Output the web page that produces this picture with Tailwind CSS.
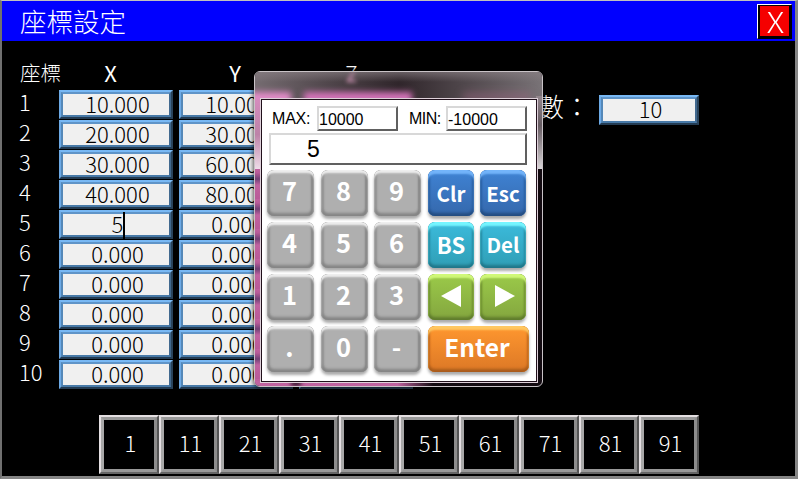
<!DOCTYPE html>
<html lang="zh-Hant">
<head>
<meta charset="utf-8">
<title>座標設定</title>
<script src="https://cdn.jsdelivr.net/npm/@tailwindcss/browser@4"></script>
</head>
<body class="bg-black">
<div class="relative flex h-[479px] w-[798px] flex-col overflow-hidden border-t border-l-2 border-r-3 border-b-3 border-t-[#c0c0c0] border-l-[#707070] border-r-[#858585] border-b-[#858585] bg-black font-['Noto_Sans_CJK_TC',sans-serif] font-light text-white">
  <header class="-ml-[2px] flex h-10 w-[797px] shrink-0 items-center justify-between bg-[#0000ff] pl-5 pr-[5px]">
    <h1 class="text-[26.5px] leading-[38px] font-light">座標設定</h1>
    <button class="flex h-[35px] w-[35px] items-center justify-center border border-r-black border-b-black border-t-white border-l-white bg-black">
      <span class="flex h-[30px] w-[29px] items-center justify-center bg-[#f50000] pl-[2px] text-[28px] leading-none"><span class="inline-block scale-x-115">X</span></span>
    </button>
  </header>

  <main class="flex pl-[17px] pt-[19px]">
    <section class="grid w-[395px] shrink-0 grid-cols-[34px_114px_114px_114px] gap-x-[6px]" id="grid">
      <div class="h-[30px] pl-px text-[20.5px] leading-[25px] whitespace-nowrap">座標</div>
      <div class="h-[30px] pr-[11px] text-center text-[22px] leading-[24px] font-normal">X</div>
      <div class="h-[30px] pr-[2px] text-center text-[22px] leading-[24px] font-normal">Y</div>
      <div class="h-[30px] pr-[10px] text-center text-[22px] leading-[24px]">Z</div>
    </section>
    <section class="flex h-[65px] flex-1 items-start justify-end pt-[35px] pr-[96px]">
      <span class="shrink-0 pr-[2px] text-right text-[26px] leading-[22px] whitespace-nowrap">數：</span>
      <div class="ml-[7px] h-[30px] w-[100px] shrink-0 border-2 border-t-[#78b8f4] border-l-[#6daae6] border-r-[#29435b] border-b-[#243c53]"><div class="h-full border-2 border-t-[#5f94c8] border-l-[#5488b8] border-r-[#41698f] border-b-[#487aa8] bg-[#f0f0f0] pl-[3px] text-center text-[22px] leading-[19px] text-black">10</div></div>
    </section>
  </main>

  <nav class="absolute top-[414px] left-[97px] flex" id="nav"></nav>

  <!-- numeric keypad -->
  <div class="absolute top-[70px] left-[252px] h-[316px] w-[289px] overflow-hidden rounded-[6px] border border-[#c9c3c7] bg-[#130b11] shadow-[0_0_4px_1px_rgba(0,0,0,0.65)]" role="dialog">
    <div class="absolute inset-x-0 top-0 h-[28px] bg-linear-to-r from-[#756c71] via-[#30262b] via-50% to-[#797377]"></div>
    <div class="absolute inset-x-0 top-0 h-[10px] bg-linear-to-b from-[#8b8286]/60 to-transparent"></div>
    <div class="absolute top-[20px] -left-2 h-[12px] w-[44px] bg-[#e38cc9] blur-[3px]"></div>
    <div class="absolute top-[20px] left-[49px] h-[12px] w-[108px] bg-[#d473b9] blur-[3px]"></div>
    <div class="absolute top-[21px] left-[208px] h-[8px] w-[68px] bg-[#97647f]/60 blur-[4px]"></div>
    <svg class="absolute top-0 left-[90px] blur-[2px]" width="14" height="14" viewBox="0 0 14 14"><path d="M9 0L3 9H11" fill="none" stroke="#d69abb" stroke-width="2"/></svg>
    <div class="absolute top-[28px] left-0 h-[69px] w-[6px] bg-linear-to-b from-[#d58cbd] via-[#bd83a8] to-[#eedce8]"></div>
    <div class="absolute top-[97px] left-0 h-[218px] w-[6px] bg-[repeating-linear-gradient(180deg,#c063a0_0px,#b65b97_4px,#704277_10px,#c063a0_16px,#b95b98_30px)]"></div>
    <div class="absolute top-[24px] right-0 h-[73px] w-[6px] bg-linear-to-b from-[#94878e] via-[#665c62] via-40% to-[#dad7d9]"></div>
    <div class="absolute bottom-0 left-0 h-[5px] w-[178px] bg-linear-to-r from-[#c063a0] from-70% via-[#c063a0] via-80% to-transparent"></div>
    <div class="absolute bottom-0 left-[36px] h-[5px] w-[10px] bg-[#2c1024] blur-[2px]"></div>

    <div class="absolute top-[26px] left-[5px] flex h-[285px] w-[278px] flex-col border border-[#dfd1da] bg-white pt-[7px] pl-[8px] font-['Liberation_Sans',sans-serif] font-normal text-black shadow-[inset_0_0_0_1px_#20101b]">
      <div class="flex h-[26px] items-start text-[16px]">
        <span class="w-[48px] pl-[3px] leading-[25px] tracking-[-0.2px]">MAX:</span>
        <div class="h-[25px] w-[81px] border-2 border-t-[#d8d8d8] border-l-[#d8d8d8] border-r-[#606060] border-b-[#606060] leading-[23px]">10000</div>
        <span class="w-[48px] pl-[11px] leading-[25px] tracking-[-0.5px]">MIN:</span>
        <div class="h-[25px] w-[81px] border-2 border-t-[#d8d8d8] border-l-[#d8d8d8] border-r-[#606060] border-b-[#606060] leading-[23px]">-10000</div>
      </div>
      <div class="mt-[1px] h-[32px] w-[258px] border-2 border-t-[#d8d8d8] border-l-[#d8d8d8] border-r-[#606060] border-b-[#606060] pl-[36px] text-[23px] leading-[29px]">5</div>
      <div class="-ml-[2px] mt-[5px] grid grid-cols-[48px_47px_48px_46px_46px] gap-x-[6px] gap-y-[6px] font-['Noto_Sans_CJK_TC',sans-serif]" id="keys"></div>
    </div>
  </div>
</div>
<script>
  const grid = document.getElementById('grid');
  const x = ['10.000','20.000','30.000','40.000','5','0.000','0.000','0.000','0.000','0.000'];
  const y = ['10.000','30.000','60.000','80.000','0.000','0.000','0.000','0.000','0.000','0.000'];
  const cell = (v, active) => `<div class="h-[29px] mb-px border-2 border-t-[#78b8f4] border-l-[#6daae6] border-r-[#29435b] border-b-[#243c53]"><div class="relative h-full border-2 border-t-[#5f94c8] border-l-[#5488b8] border-r-[#41698f] border-b-[#487aa8] bg-[#f0f0f0] pl-[3px] text-center text-[22px] leading-[18px] text-black">${v}${active ? '<i class="absolute -top-[2px] left-[60px] h-[27px] w-[2px] bg-black"></i>' : ''}</div></div>`;
  let rows = '';
  for (let i = 0; i < 10; i++) {
    rows += `<div class="h-[30px] text-[22px] leading-[23px]">${i + 1}</div>` + cell(x[i], i === 4) + cell(y[i]) + cell('');
  }
  grid.insertAdjacentHTML('beforeend', rows);

  document.getElementById('nav').innerHTML = [1,11,21,31,41,51,61,71,81,91].map(n =>
    `<button class="h-[59px] w-[60px] border-2 border-t-[#e4dfe2] border-l-[#e4dfe2] border-r-[#555] border-b-[#666]"><span class="block h-full border-3 border-t-[#989898] border-l-[#a8a8a8] border-r-[#8c8c8c] border-b-[#999] pl-[3px] text-center text-[22px] leading-[45px]">${n}</span></button>`).join('');

  const gray = 'w-[47px] bg-[#afafaf] shadow-[inset_0_3px_2px_#eeeeee,inset_0_-3px_3px_#858585,inset_3px_0_2px_#929292,inset_-3px_0_2px_#848484,0_3px_3px_#aaa]';
  const blue = 'bg-linear-to-b from-[#3f83d4] to-[#3568ac] shadow-[inset_0_4px_2px_#73b4fa,inset_0_-3px_3px_#244d81,inset_2px_0_2px_#285fa4,inset_-2px_0_2px_#285fa4,0_3px_3px_#aaa]';
  const cyan = 'bg-linear-to-b from-[#3bbbdc] to-[#309eb5] shadow-[inset_0_4px_2px_#75f5ff,inset_0_-3px_3px_#217789,inset_2px_0_2px_#228aa5,inset_-2px_0_2px_#228aa5,0_3px_3px_#aaa]';
  const green = 'bg-linear-to-b from-[#9bca49] to-[#84a63f] shadow-[inset_0_4px_2px_#d0f879,inset_0_-3px_3px_#607d2d,inset_2px_0_2px_#6c8f2e,inset_-2px_0_2px_#6c8f2e,0_3px_3px_#aaa]';
  const orange = 'bg-linear-to-b from-[#ff972f] to-[#dc7826] shadow-[inset_0_4px_2px_#ffc760,inset_0_-3px_3px_#a85b1b,inset_2px_0_2px_#c5681c,inset_-2px_0_2px_#c5681c,0_3px_3px_#aaa]';
  const left = '<svg class="-mt-[3px]" width="20" height="22" viewBox="0 0 20 22"><path d="M0 11L20 0V22Z" fill="#fff"/></svg>';
  const right = '<svg class="-mt-[3px] ml-[4px]" width="20" height="22" viewBox="0 0 20 22"><path d="M0 0L20 11L0 22Z" fill="#fff"/></svg>';
  const keys = [['7',gray],['8',gray],['9',gray],['Clr',blue],['Esc',blue],
    ['4',gray],['5',gray],['6',gray],['BS',cyan],['Del',cyan],
    ['1',gray],['2',gray],['3',gray],[left,green],[right,green],
    ['.',gray],['0',gray],['-',gray],['Enter',orange]];
  document.getElementById('keys').innerHTML = keys.map(([k, c]) => {
    const size = k === 'Enter' ? 'col-span-2 text-[24.5px] pb-[3px] pr-[3px] w-[101px]' : k.length === 1 ? 'text-[25.5px] pb-[6px] pr-[2px]' : k === 'BS' ? 'text-[22px] pb-[2px]' : k === 'Del' ? 'text-[20.5px] pb-[2px]' : 'text-[20.5px]';
    return `<button class="flex h-[46px] items-center justify-center rounded-[7px] font-bold leading-none text-white ${c} ${size}">${k}</button>`;
  }).join('');
</script>
</body>
</html>
